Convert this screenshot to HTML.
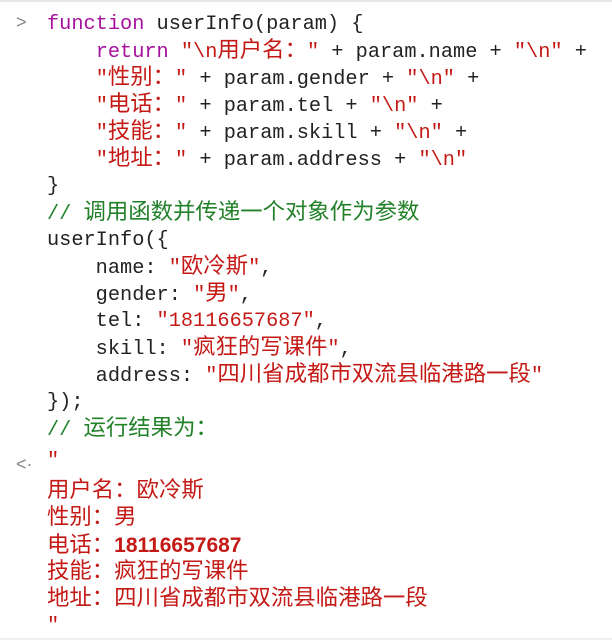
<!DOCTYPE html>
<html><head><meta charset="utf-8"><style>
html,body{margin:0;padding:0;background:#fff;width:612px;height:642px;overflow:hidden}
body{border-top:2px solid #e6e6e6;box-sizing:border-box;position:relative}
.b{position:absolute;left:47px;font-family:"Liberation Mono","Noto Sans CJK SC",monospace;font-size:20.3px;color:#222}
.b div{height:27px;line-height:27px;white-space:pre}
.z{font-family:"WenQuanYi Zen Hei","Noto Sans CJK SC",sans-serif;font-size:22.4px;line-height:20px}
.k{color:#a5119c}.s{color:#c41a16}.c{color:#23812a}
.r{color:#c41a16}
.ar{position:absolute;left:16px;color:#888;font-family:"Liberation Sans",sans-serif;font-size:18px}
.bot{position:absolute;left:0;right:0;bottom:2px;border-top:2px solid #eee}
</style></head><body>
<span class="ar" style="top:10px">&gt;</span>
<div class="b" style="top:9px">
<div><span class="k">function</span> userInfo(param) {</div>
<div>    <span class="k">return</span> <span class="s">"\n<span class="z">用户名：</span>"</span> + param.name + <span class="s">"\n"</span> +</div>
<div>    <span class="s">"<span class="z">性别：</span>"</span> + param.gender + <span class="s">"\n"</span> +</div>
<div>    <span class="s">"<span class="z">电话：</span>"</span> + param.tel + <span class="s">"\n"</span> +</div>
<div>    <span class="s">"<span class="z">技能：</span>"</span> + param.skill + <span class="s">"\n"</span> +</div>
<div>    <span class="s">"<span class="z">地址：</span>"</span> + param.address + <span class="s">"\n"</span></div>
<div>}</div>
<div><span class="c">// <span class="z">调用函数并传递一个对象作为参数</span></span></div>
<div>userInfo({</div>
<div>    name: <span class="s">"<span class="z">欧冷斯</span>"</span>,</div>
<div>    gender: <span class="s">"<span class="z">男</span>"</span>,</div>
<div>    tel: <span class="s">"18116657687"</span>,</div>
<div>    skill: <span class="s">"<span class="z">疯狂的写课件</span>"</span>,</div>
<div>    address: <span class="s">"<span class="z">四川省成都市双流县临港路一段</span>"</span></div>
<div>});</div>
<div><span class="c">// <span class="z">运行结果为：</span></span></div>
</div>
<span class="ar" style="top:452px">&lt;·</span>
<div class="b r" style="top:446px"><div>"</div></div>
<div class="b r" style="top:476px">
<div><span class="z">用户名：欧冷斯</span></div>
<div><span class="z">性别：男</span></div>
<div><span class="z">电话：</span><b style="font-family:'Liberation Sans',sans-serif;font-size:21px">18116657687</b></div>
<div><span class="z">技能：疯狂的写课件</span></div>
<div><span class="z">地址：四川省成都市双流县临港路一段</span></div>
<div>"</div>
</div>
<div class="bot"></div>
</body></html>
